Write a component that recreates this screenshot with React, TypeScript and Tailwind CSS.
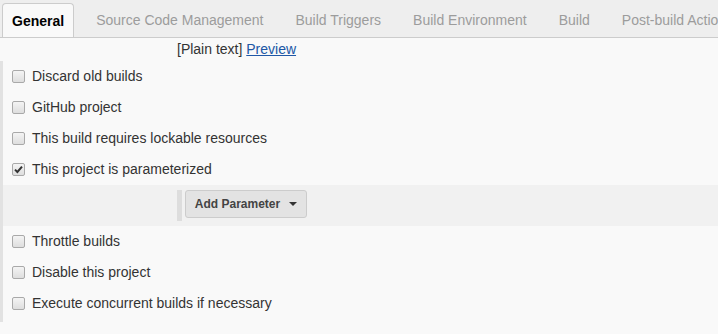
import React from 'react';

const tabs = ['Source Code Management', 'Build Triggers', 'Build Environment', 'Build', 'Post-build Actions'];

const topOptions = [
  { label: 'Discard old builds', checked: false },
  { label: 'GitHub project', checked: false },
  { label: 'This build requires lockable resources', checked: false },
  { label: 'This project is parameterized', checked: true },
];

const bottomOptions = ['Throttle builds', 'Disable this project', 'Execute concurrent builds if necessary'];

function Box({ checked }: { checked: boolean }) {
  return (
    <span className="w-[13px] h-[13px] shrink-0 rounded-[2px] border border-[#a9a9a9] bg-gradient-to-b from-[#f4f4f4] to-[#dedede] flex items-center justify-center">
      {checked && (
        <svg width="9" height="9" viewBox="0 0 9 9">
          <path d="M1 4.6 L3.4 7 L8 1.6" fill="none" stroke="#333" strokeWidth="2" />
        </svg>
      )}
    </span>
  );
}

function OptionRow({ label, checked = false }: { label: string; checked?: boolean }) {
  return (
    <div className="h-[31px] flex items-center gap-[7px] pl-[9px]">
      <Box checked={checked} />
      <span className="text-[14px] text-[#333]">{label}</span>
    </div>
  );
}

export default function App() {
  return (
    <div className="w-[718px] h-[334px] overflow-hidden bg-[#f9f9f9] font-['Liberation_Sans',Arial,sans-serif]">
      <div className="h-[38px] bg-[#eeeeee] border-b border-[#cccccc] flex items-end pl-[2px] whitespace-nowrap overflow-hidden">
        <div className="h-[35px] -mb-px px-[9px] mr-[6px] flex items-center rounded-t-[4px] border border-b-0 border-[#cccccc] bg-[#f9f9f9] text-[14px] font-bold text-black">
          General
        </div>
        {tabs.map((t) => (
          <div key={t} className="h-[34px] px-[16px] flex items-center text-[14px] text-[#9c9c9c]">
            {t}
          </div>
        ))}
      </div>

      <div className="h-[23px] flex items-center pl-[177px] text-[14px] text-[#333]">
        [Plain text]&nbsp;<span className="text-[#2057a6] underline">Preview</span>
      </div>

      <div className="border-l-[3px] border-[#e2e2e2] pb-[3px]">
        {topOptions.map((o) => (
          <OptionRow key={o.label} label={o.label} checked={o.checked} />
        ))}
        <div className="h-[41px] bg-[#f1f1f1] flex items-start pt-[5px] pl-[174px]">
          <div className="w-[5px] h-[31px] bg-[#dddddd]" />
          <button className="ml-[3px] h-[28px] w-[122px] rounded-[3px] border border-[#cccccc] bg-[#e3e3e3] flex items-center justify-center gap-[9px] text-[12px] font-bold text-[#444]">
            Add Parameter
            <svg width="8" height="4" viewBox="0 0 8 4">
              <path d="M0 0 L8 0 L4 4 Z" fill="#333" />
            </svg>
          </button>
        </div>
        {bottomOptions.map((l) => (
          <OptionRow key={l} label={l} />
        ))}
      </div>
    </div>
  );
}
